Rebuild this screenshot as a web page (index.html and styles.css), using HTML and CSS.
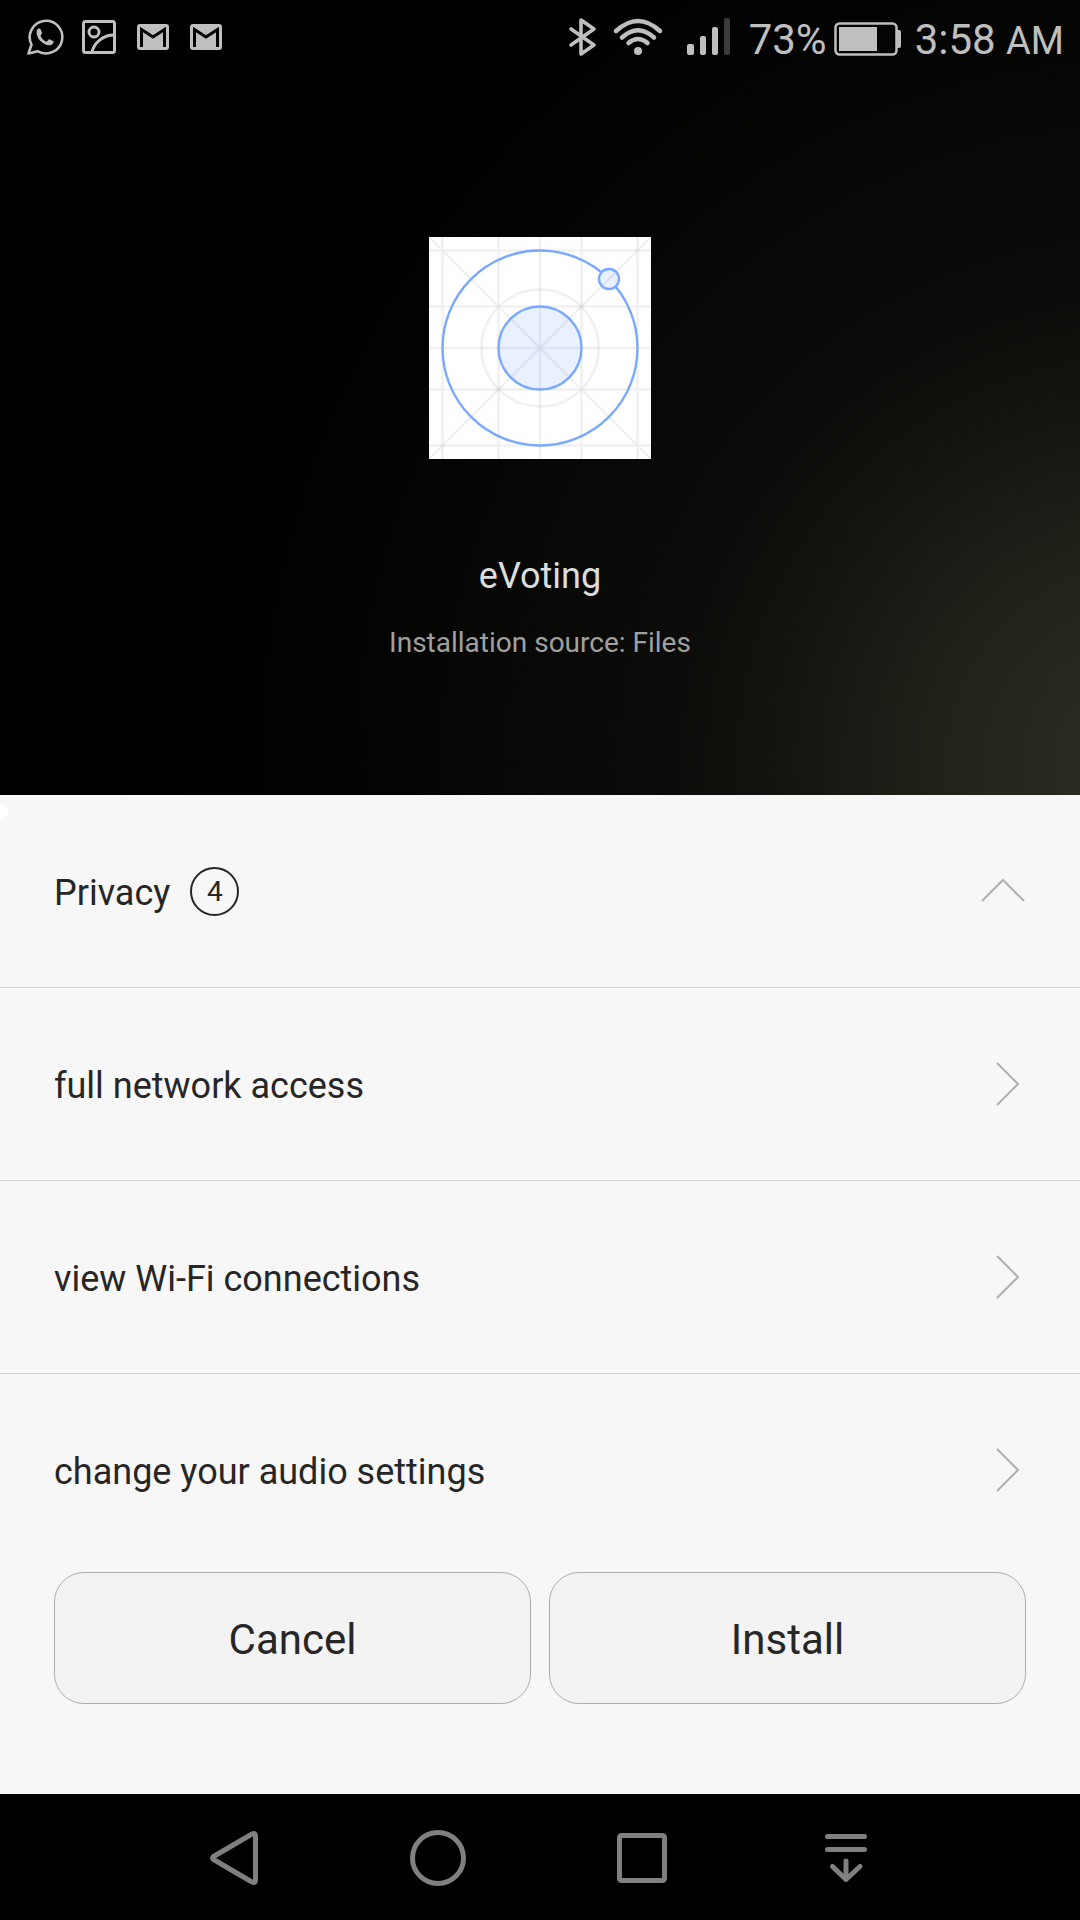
FILE: index.html
```html
<!DOCTYPE html>
<html lang="en">
<head>
<meta charset="utf-8">
<meta name="viewport" content="width=device-width, initial-scale=1">
<title>eVoting</title>
<link rel="stylesheet" href="styles.css">
</head>
<body>
<header class="hero">
  <div class="status">
    <div class="status-group notifications">
      <svg width="34" height="36" viewBox="0 0 34 36" role="img" aria-label="WhatsApp"><path d="M4.500 25.500A16.300 16.300 0 1 1 11 32.300L1.500 34.500L4.500 25.500Z" fill="none" stroke="currentColor" stroke-width="2.600" stroke-linejoin="round"/><path d="M10 11c1-2 3-2 4 0l1 3c0 1-1 2-1.500 2.500c1 3 3 5 6 6.200l2-2c.6-.6 1-.6 2 0l2.500 1.300c1 .5.8 1 .3 2c-1.300 2.500-5 3-8.300 1.300c-4-2-7-5-8-9c-.5-2-.5-4 0-5.300z" fill="currentColor"/></svg>
      <svg width="34" height="34" viewBox="0 0 34 34" fill="none" stroke="currentColor" stroke-width="3" role="img" aria-label="Screenshot"><rect x="1.500" y="1.500" width="31" height="31" rx="2"/><circle cx="12" cy="12" r="5"/><path d="M10 32C12 23 21 15 32 15"/></svg>
      <svg width="32" height="26" viewBox="0 0 32 26" role="img" aria-label="Mail"><rect width="32" height="26" rx="3" fill="currentColor"/><path d="M4.500 23V5.500L16 13L27.500 5.500V23" fill="none" stroke="#000" stroke-width="3"/></svg>
      <svg width="32" height="26" viewBox="0 0 32 26" role="img" aria-label="Mail"><rect width="32" height="26" rx="3" fill="currentColor"/><path d="M4.500 23V5.500L16 13L27.500 5.500V23" fill="none" stroke="#000" stroke-width="3"/></svg>
    </div>
    <div class="status-group system">
      <svg width="28" height="38" viewBox="0 0 28 38" fill="none" stroke="currentColor" stroke-width="3.600" stroke-linecap="round" stroke-linejoin="round" role="img" aria-label="Bluetooth"><path d="M2 11L25 27L12 36V2L25 11L2 27"/></svg>
      <svg class="wifi" width="50" height="38" viewBox="0 0 50 38" fill="none" stroke="currentColor" stroke-width="4.500" stroke-linecap="round" role="img" aria-label="Wi-Fi"><path d="M3 13Q25-7 47 13M9 19.500Q25 5 41 19.500M15.500 25Q25 17 34.500 25"/><circle cx="25" cy="33" r="4" fill="currentColor" stroke="none"/></svg>
      <svg class="signal" width="44" height="38" viewBox="0 0 44 38" fill="currentColor" role="img" aria-label="Signal"><rect y="26" width="7" height="11" rx="2"/><rect x="13" y="18" width="6" height="19" rx="2"/><rect x="25" y="9" width="6" height="28" rx="2"/><rect x="37" width="6" height="37" rx="2" fill="#3c3c3c"/></svg>
      <span class="percent">73%</span>
      <svg class="battery" width="67" height="34" viewBox="0 0 67 34" role="img" aria-label="Battery"><rect x="1.500" y="1.500" width="61" height="31" rx="4" fill="none" stroke="currentColor" stroke-width="2.500"/><rect x="5" y="5" width="38" height="24" fill="currentColor"/><path d="M63 8h2q2 0 2 2v14q0 2-2 2h-2z" fill="currentColor"/></svg>
      <time class="clock">3:58 <small>AM</small></time>
    </div>
  </div>
  <svg class="app-icon" width="222" height="222" viewBox="0 0 222 222" fill="none" role="img" aria-label="eVoting icon">
    <path fill="#fff" d="M0 0h222v222H0z"/>
    <circle cx="111" cy="111" r="41" fill="#eaf1fe"/>
    <g stroke="#000" stroke-opacity=".06" stroke-width="2.500"><path d="M0 13.500H222M0 69.500H222M0 111H222M0 152.500H222M0 208.500H222M13.500 0V222M69.500 0V222M111 0V222M152.500 0V222M208.500 0V222M0 0L222 222"/><path d="M222 0L0 222"/><circle cx="111" cy="111" r="58.500"/></g>
    <g stroke="#78a9fc" stroke-width="2.400"><circle cx="111" cy="111" r="97.500"/><circle cx="111" cy="111" r="41.500"/><circle cx="180" cy="42" r="10" fill="#eaf1fe"/></g>
    <path d="M174 48L186 36" stroke="#000" stroke-opacity=".07" stroke-width="2"/>
  </svg>
  <h1 class="app-name">eVoting</h1>
  <p class="source">Installation source: Files</p>
</header>
<main class="panel">
  <button class="row" type="button" aria-expanded="true">
    <span class="label">Privacy</span><span class="count">4</span>
    <svg class="chevron" width="42" height="22" viewBox="0 0 42 22"><path d="M0 21L21 0L42 21"/></svg>
  </button>
  <button class="row permission" type="button"><span class="label">full network access</span><svg class="chevron" width="22" height="42" viewBox="0 0 22 42"><path d="M0 0L21 21L0 42"/></svg></button>
  <button class="row permission" type="button"><span class="label">view Wi-Fi connections</span><svg class="chevron" width="22" height="42" viewBox="0 0 22 42"><path d="M0 0L21 21L0 42"/></svg></button>
  <button class="row permission" type="button"><span class="label">change your audio settings</span><svg class="chevron" width="22" height="42" viewBox="0 0 22 42"><path d="M0 0L21 21L0 42"/></svg></button>
  <div class="actions">
    <button class="action" type="button">Cancel</button>
    <button class="action" type="button">Install</button>
  </div>
</main>
<nav class="navbar" aria-label="System navigation">
  <button type="button" aria-label="Back"><svg width="60" height="60" viewBox="0 0 60 60"><path d="M9.500 28.500L48 6Q51.500 4.500 51.500 8V52Q51.500 55.500 48 54L9.500 31.500Q7.500 30 9.500 28.500Z"/></svg></button>
  <button type="button" aria-label="Home"><svg width="60" height="60" viewBox="0 0 60 60"><circle cx="30" cy="30" r="25.500"/></svg></button>
  <button type="button" aria-label="Recent apps"><svg width="60" height="60" viewBox="0 0 60 60"><rect x="7.500" y="7.500" width="45" height="45" rx="2"/></svg></button>
  <button type="button" aria-label="Notifications"><svg width="60" height="60" viewBox="0 0 60 60" stroke-linecap="round"><path d="M11.500 8.500H48.500M11.500 21.500H48.500M30 33V51.500M16.500 38.500L30 51.500L44 38.500"/></svg></button>
</nav>
</body>
</html>
```
FILE: styles.css
```css
* { box-sizing: border-box; }
body {
  margin: 0;
  min-height: 100vh;
  display: flex;
  flex-direction: column;
  background: #f7f7f7;
  color: #262626;
  font-family: Roboto, "Liberation Sans", sans-serif;
  font-size: 36px;
}
button { font: inherit; color: inherit; border: 0; background: none; padding: 0; }
svg { display: block; flex: none; overflow: visible; }

.hero {
  display: flex;
  flex-direction: column;
  align-items: center;
  padding-bottom: 132px;
  background: #000 radial-gradient(circle at 106% 96%, #2b2a23 0, #2a2922 5%, #21211a 16%, #151610 25%, #0c0c0a 34%, #080906 45%, #020202 60%, #000 75%);
}
.status {
  align-self: stretch;
  display: flex;
  justify-content: space-between;
  height: 74px;
  padding: 0 16px 0 27px;
  color: #bfbfbf;
}
.status-group { display: flex; align-items: center; }
.notifications { gap: 21px; }
.system { font-size: 42px; }
.system small { font-size: 38px; }
.percent, .clock { padding-top: 5px; }
.wifi { margin-left: 16px; }
.signal { margin-left: 24px; }
.percent { margin-left: 18px; }
.battery { margin: 3px 14px 0 7px; }

.app-icon { margin-top: 163px; }
.app-name {
  margin: 94px 0 0;
  font-size: 36px;
  font-weight: 400;
  line-height: 46px;
  color: #dcdcdc;
}
.source {
  margin: 25px 0 0;
  padding-bottom: 1px;
  font-size: 28px;
  line-height: 38px;
  color: #a0a0a0;
}

.panel { position: relative; flex: 1; display: flex; flex-direction: column; }
.panel::before {
  content: "";
  position: absolute;
  left: -8px;
  top: 9px;
  width: 16px;
  height: 16px;
  border-radius: 50%;
  background: #fff;
}
.row {
  display: flex;
  align-items: center;
  height: 193px;
  padding: 0 56px 0 54px;
  border-bottom: 1px solid #cfcfcf;
  text-align: left;
}
.permission { padding-right: 61px; }
.permission:nth-child(4) { border-bottom-color: transparent; }
.label { padding-top: 3px; }
.count {
  width: 49px;
  height: 49px;
  margin-left: 20px;
  border: 2px solid #262626;
  border-radius: 50%;
  font-size: 28px;
  line-height: 46px;
  text-align: center;
}
.chevron { margin-left: auto; fill: none; stroke: #b0b0b0; stroke-width: 2; }
.actions {
  display: grid;
  grid-template-columns: 1fr 1fr;
  gap: 18px;
  margin-top: auto;
  padding: 5px 54px 90px;
}
.action {
  height: 132px;
  padding-top: 3px;
  border: 1px solid #adadad;
  border-radius: 30px;
  background: #f3f3f3;
  font-size: 42px;
}

.navbar {
  display: flex;
  justify-content: center;
  gap: 144px;
  height: 126px;
  padding-top: 2px;
  background: #000;
}
.navbar svg { fill: none; stroke: #808080; stroke-width: 5; stroke-linejoin: round; }
```
